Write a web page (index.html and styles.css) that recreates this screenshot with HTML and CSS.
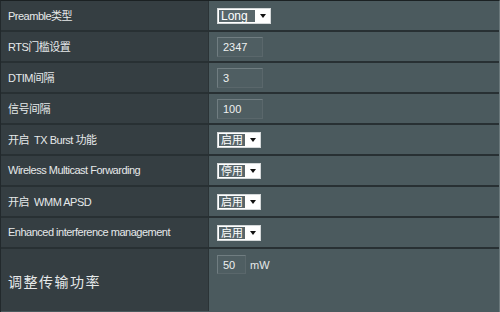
FILE: index.html
```html
<!DOCTYPE html>
<html lang="zh-CN">
<head>
    <meta charset="UTF-8">
    <meta name="viewport" content="width=device-width, initial-scale=1.0">
    <title>无线专业设置</title>
    <link rel="stylesheet" href="styles.css">
</head>
<body>
    <div class="panel">
        <div class="row">
            <div class="label">Preamble类型</div>
            <div class="field">
                <span class="dropdown wide"><span class="choice">Long</span><span class="caret"></span></span>
            </div>
        </div>
        <div class="row">
            <div class="label">RTS门槛设置</div>
            <div class="field"><input type="text" class="box" value="2347"></div>
        </div>
        <div class="row">
            <div class="label">DTIM间隔</div>
            <div class="field"><input type="text" class="box" value="3"></div>
        </div>
        <div class="row">
            <div class="label">信号间隔</div>
            <div class="field"><input type="text" class="box" value="100"></div>
        </div>
        <div class="row">
            <div class="label">开启&nbsp; TX Burst 功能</div>
            <div class="field">
                <span class="dropdown"><span class="choice">启用</span><span class="caret"></span></span>
            </div>
        </div>
        <div class="row">
            <div class="label">Wireless Multicast Forwarding</div>
            <div class="field">
                <span class="dropdown"><span class="choice">停用</span><span class="caret"></span></span>
            </div>
        </div>
        <div class="row">
            <div class="label">开启&nbsp; WMM APSD</div>
            <div class="field">
                <span class="dropdown"><span class="choice">启用</span><span class="caret"></span></span>
            </div>
        </div>
        <div class="row">
            <div class="label">Enhanced interference management</div>
            <div class="field">
                <span class="dropdown"><span class="choice">启用</span><span class="caret"></span></span>
            </div>
        </div>
        <div class="row tall">
            <div class="label spaced">调整传输功率</div>
            <div class="field top">
                <input type="text" class="box small" value="50">
                <span class="unit">mW</span>
            </div>
        </div>
    </div>
</body>
</html>
```

FILE: styles.css
```css
:root {
    --label-bg: #353e42;
    --field-bg: #4b5a5e;
    --line-color: #283033;
    --text-color: #e6e9ea;
}

body {
    margin: 0;
    background-color: var(--field-bg);
    font-family: "Liberation Sans", Arial, "Noto Sans CJK SC", sans-serif;
    font-size: 11px;
    color: var(--text-color);
    overflow: hidden;
}

.panel {
    width: 500px;
    height: 312px;
    box-sizing: border-box;
    border-top: 1px solid #1b2123;
    border-left: 1px solid #22292c;
    border-right: 1px solid #6a787b;
    background-color: var(--field-bg);
}

.row {
    display: grid;
    grid-template-columns: 208px 1fr;
    height: 31px;
    box-sizing: border-box;
    border-bottom: 2px solid var(--line-color);
}

.row.tall {
    height: 62px;
    border-bottom: none;
}

.label {
    display: flex;
    align-items: center;
    padding-left: 7px;
    padding-bottom: 1px;
    background-color: var(--label-bg);
    border-right: 1px solid #2b3336;
    white-space: nowrap;
    letter-spacing: -0.5px;
}

.label.spaced {
    font-size: 14px;
    letter-spacing: 1.5px;
    padding-top: 2px;
}

.field {
    display: flex;
    align-items: center;
    gap: 4px;
    padding-left: 8px;
}

.field.top {
    align-items: flex-start;
    padding-top: 6px;
}

.box {
    width: 46px;
    height: 20px;
    box-sizing: border-box;
    margin: 0;
    padding: 0 5px;
    border: 1px solid #707d81;
    border-right-color: #5a676b;
    border-bottom-color: #5a676b;
    background-color: #4f5e62;
    color: #eef0f0;
    font-family: inherit;
    font-size: 11px;
    outline: none;
}

.box.small {
    width: 29px;
    height: 19px;
}

.unit {
    padding-top: 4px;
    font-size: 11px;
}

.dropdown {
    display: inline-flex;
    align-items: center;
    width: 44px;
    height: 16px;
    box-sizing: border-box;
    padding: 1px;
    background-color: #ffffff;
    border: 1px solid #d4d8d9;
}

.dropdown.wide {
    width: 54px;
}

.choice {
    height: 12px;
    line-height: 12px;
    padding: 0 2px;
    background-color: #58666a;
    color: #ffffff;
    font-size: 11px;
}

.dropdown.wide .choice {
    width: 32px;
    font-size: 12px;
}

.caret {
    width: 0;
    height: 0;
    margin-left: auto;
    margin-right: 3px;
    border-left: 3px solid transparent;
    border-right: 3px solid transparent;
    border-top: 4px solid #111111;
}
```
